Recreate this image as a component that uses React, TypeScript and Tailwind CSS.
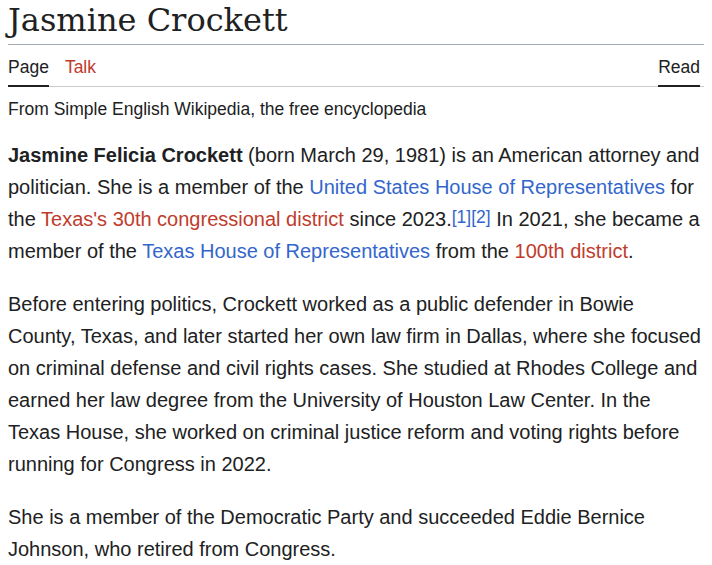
import React from 'react';

const Link: React.FC<{ red?: boolean; children: React.ReactNode }> = ({ red, children }) => (
  <a className={red ? 'text-[#bf3c2c] cursor-pointer' : 'text-[#36c] cursor-pointer'}>{children}</a>
);

const Ref: React.FC<{ n: number }> = ({ n }) => (
  <sup className="text-[17.5px] leading-none text-[#36c] relative -top-[3px]">[{n}]</sup>
);

/**
 * Article page
 */
const App: React.FC = () => {
  return (
    <div className="w-[712px] h-[565px] overflow-hidden bg-white px-2 text-[#202122] font-['Liberation_Sans',Arial,sans-serif]">
      <h1 className="h-[45px] border-b border-[#a2a9b1] font-['DejaVu_Serif','Liberation_Serif',serif] text-[32px] leading-[40px]">
        Jasmine Crockett
      </h1>

      <div className="flex justify-between border-b border-[#c8ccd1] h-[42px] text-[17.5px]">
        <div className="flex gap-4">
          <span className="flex items-center border-b-2 border-[#202122] -mb-px pt-[4px]">Page</span>
          <span className="flex items-center text-[#bf3c2c] pt-[4px]">Talk</span>
        </div>
        <span className="flex items-center border-b-2 border-[#202122] -mb-px pt-[4px] mr-[4px]">Read</span>
      </div>

      <p className="text-[17.5px] mt-[10px] leading-[24px]">From Simple English Wikipedia, the free encyclopedia</p>

      <div className="text-[20px] leading-[32px] mt-[18px]">
        <p className="mb-[21px]">
          <b>Jasmine Felicia Crockett</b> (born March 29, 1981) is an American attorney and politician. She is a
          member of the <Link>United States House of Representatives</Link> for the{' '}
          <Link red>Texas's 30th congressional district</Link> since 2023.
          <Ref n={1} />
          <Ref n={2} /> In 2021, she became a member of the <Link>Texas House of Representatives</Link> from the{' '}
          <Link red>100th district</Link>.
        </p>
        <p className="mb-[21px]">
          Before entering politics, Crockett worked as a public defender in Bowie County, Texas, and later started
          her own law firm in Dallas, where she focused on criminal defense and civil rights cases. She studied at
          Rhodes College and earned her law degree from the University of Houston Law Center. In the Texas House,
          she worked on criminal justice reform and voting rights before running for Congress in 2022.
        </p>
        <p>
          She is a member of the Democratic Party and succeeded Eddie Bernice Johnson, who retired from
          Congress.
        </p>
      </div>
    </div>
  );
};

export default App;
